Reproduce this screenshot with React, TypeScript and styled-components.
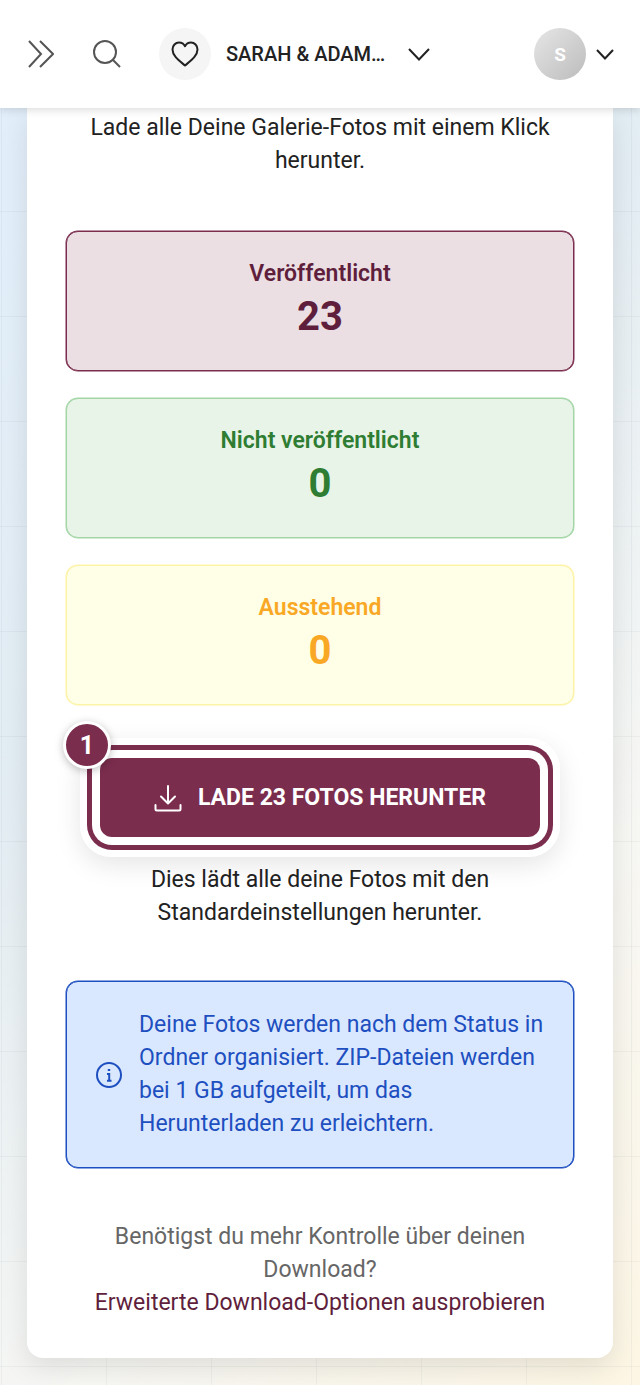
import React from "react";
import styled, { createGlobalStyle } from "styled-components";

const Global = createGlobalStyle`
  * { box-sizing: border-box; }
  html, body { margin: 0; padding: 0; }
  body {
    font-family: Roboto, "Liberation Sans", sans-serif;
    min-height: 1385px;
    overflow: hidden;
    background-color: #f5f5f2;
    background-image:
      linear-gradient(rgba(120,130,140,0.08) 1px, transparent 1px),
      linear-gradient(90deg, rgba(120,130,140,0.08) 1px, transparent 1px),
      linear-gradient(135deg, #e2effc 0%, #e3edf3 40%, #f7f7f4 72%, #fdf6e4 100%);
    background-size: 105px 105px, 105px 105px, 100% 1385px;
    background-position: 0 1px, 1px 0, 0 0;
  }
`;

const Page = styled.div`
  width: 640px;
  height: 1385px;
  overflow: hidden;
`;

const Header = styled.header`
  position: relative;
  z-index: 2;
  height: 108px;
  background: #fff;
  box-shadow: 0 2px 8px rgba(0, 0, 0, 0.14);
  display: flex;
  align-items: center;
  padding: 0 26px 0 28px;
`;

const IconSlot = styled.span<{ $w: number; $mr: number; $color?: string }>`
  display: flex;
  align-items: center;
  justify-content: center;
  width: ${(p) => p.$w}px;
  margin-right: ${(p) => p.$mr}px;
  color: ${(p) => p.$color ?? "#222"};
  flex: none;
`;

const HeartBubble = styled.span`
  width: 52px;
  height: 52px;
  border-radius: 50%;
  background: #f5f5f5;
  display: flex;
  align-items: center;
  justify-content: center;
  margin-right: 15px;
  flex: none;
`;

const EventName = styled.span`
  width: 162px;
  margin-right: 20px;
  font-size: 20px;
  font-weight: 500;
  color: #222;
  white-space: nowrap;
  flex: none;
`;

const Avatar = styled.span`
  width: 52px;
  height: 52px;
  border-radius: 50%;
  margin-left: 104px;
  margin-right: 10px;
  background: linear-gradient(135deg, #e6e6e6, #bcbcbc);
  color: #fff;
  font-size: 19px;
  font-weight: 700;
  display: flex;
  align-items: center;
  justify-content: center;
  flex: none;
`;

const Card = styled.main`
  margin: 0 27px;
  height: 1250px;
  background: #fff;
  border-radius: 0 0 16px 16px;
  box-shadow: 0 10px 28px rgba(0, 0, 0, 0.1);
  padding: 3px 39px 0;
  display: flex;
  flex-direction: column;
`;

const Lead = styled.p`
  margin: 0 0 54px;
  font-size: 23px;
  line-height: 33px;
  color: #222;
  text-align: center;
`;

const Stat = styled.section<{ $bg: string; $border: string; $color: string }>`
  height: 140px;
  margin-bottom: 27px;
  border: 1px solid ${(p) => p.$border};
  box-shadow: 0 0 0 0.5px ${(p) => p.$border};
  border-radius: 12px;
  background: ${(p) => p.$bg};
  color: ${(p) => p.$color};
  display: flex;
  flex-direction: column;
  align-items: center;
  padding-top: 27px;
`;

const StatLabel = styled.div`
  font-size: 23px;
  line-height: 30px;
  font-weight: 600;
`;

const StatValue = styled.div`
  margin-top: 6px;
  font-size: 40px;
  line-height: 44px;
  font-weight: 700;
`;

const ButtonWrap = styled.div`
  position: relative;
  align-self: center;
  width: 440px;
  margin-top: 26px;
`;

const DownloadButton = styled.button`
  width: 440px;
  height: 79px;
  border: 0;
  border-radius: 12px;
  background: #7b2d4e;
  color: #fff;
  font-family: inherit;
  font-size: 23px;
  font-weight: 700;
  display: flex;
  align-items: center;
  justify-content: center;
  gap: 16px;
  box-shadow:
    0 0 0 8px #fff,
    0 0 0 13px #7b2d4e,
    0 0 0 20px #fff,
    0 8px 26px 20px rgba(0, 0, 0, 0.1);
`;

const Badge = styled.span`
  position: absolute;
  left: -37px;
  top: -37px;
  width: 48px;
  height: 48px;
  border-radius: 50%;
  border: 3px solid #fff;
  background: #7b2d4e;
  color: #fff;
  font-size: 25px;
  font-weight: 700;
  display: flex;
  align-items: center;
  justify-content: center;
  box-shadow: 0 2px 8px rgba(0, 0, 0, 0.25);
`;

const Caption = styled.p`
  margin: 26px 0 52px;
  font-size: 23px;
  line-height: 33px;
  color: #222;
  text-align: center;
`;

const InfoBox = styled.aside`
  height: 187px;
  border: 1px solid #1e4fc0;
  box-shadow: 0 0 0 0.5px #1e4fc0;
  border-radius: 12px;
  background: #d9e8fe;
  color: #1e4fc0;
  display: flex;
  align-items: center;
  gap: 17px;
  padding: 0 20px 1px 29px;
`;

const InfoIcon = styled.svg`
  flex: none;
  margin-top: 1px;
`;

const InfoText = styled.p`
  margin: 0;
  font-size: 23px;
  line-height: 33px;
`;

const Footer = styled.div`
  margin-top: 52px;
  font-size: 23px;
  line-height: 33px;
  color: #666;
  text-align: center;
`;

const AdvancedLink = styled.a`
  display: block;
  color: #5f1f3c;
  text-decoration: none;
`;

const Chevron = ({ w, h, sw = 2 }: { w: number; h: number; sw?: number }) => (
  <svg width={w} height={h} viewBox={`0 0 ${w} ${h}`} fill="none" stroke="currentColor" strokeWidth={sw}>
    <path d={`M1 1 L${w / 2} ${h - 1.5} L${w - 1} 1`} />
  </svg>
);

export default function App() {
  return (
    <Page>
      <Global />
      <Header>
        <IconSlot $w={26} $mr={39} $color="#555">
          <svg width="26" height="28" viewBox="0 0 26 28" fill="none" stroke="currentColor" strokeWidth="2">
            <path d="M1 1 L13 14 L1 27" />
            <path d="M12 1 L25 14 L12 27" />
          </svg>
        </IconSlot>
        <IconSlot $w={28} $mr={38} $color="#555">
          <svg width="28" height="28" viewBox="0 0 28 28" fill="none" stroke="currentColor" strokeWidth="2">
            <circle cx="12" cy="12" r="11" />
            <path d="M20 20 L27 27" />
          </svg>
        </IconSlot>
        <HeartBubble>
          <svg width="28" height="26" viewBox="0 0 28 26" fill="none" stroke="#222" strokeWidth="2" strokeLinejoin="round">
            <path d="M14 24.5 C8 19.5 1.5 15 1.5 8.5 C1.5 4.5 4.5 1.5 8 1.5 C10.5 1.5 12.8 2.8 14 5.2 C15.2 2.8 17.5 1.5 20 1.5 C23.5 1.5 26.5 4.5 26.5 8.5 C26.5 15 20 19.5 14 24.5 Z" />
          </svg>
        </HeartBubble>
        <EventName>SARAH &amp; ADAM…</EventName>
        <IconSlot $w={22} $mr={0}>
          <Chevron w={22} h={13} />
        </IconSlot>
        <Avatar>S</Avatar>
        <IconSlot $w={18} $mr={0}>
          <Chevron w={18} h={11} />
        </IconSlot>
      </Header>
      <Card>
        <Lead>Lade alle Deine Galerie-Fotos mit einem Klick herunter.</Lead>
        <Stat $bg="#ebdfe4" $border="#7b2d4e" $color="#5f1f3c">
          <StatLabel>Veröffentlicht</StatLabel>
          <StatValue>23</StatValue>
        </Stat>
        <Stat $bg="#e8f4e8" $border="#a3d5a5" $color="#2e7d32">
          <StatLabel>Nicht veröffentlicht</StatLabel>
          <StatValue>0</StatValue>
        </Stat>
        <Stat $bg="#fffee6" $border="#fdf3a6" $color="#f9a825">
          <StatLabel>Ausstehend</StatLabel>
          <StatValue>0</StatValue>
        </Stat>
        <ButtonWrap>
          <DownloadButton>
            <svg width="28" height="28" viewBox="0 0 28 28" fill="none" stroke="currentColor" strokeWidth="2" strokeLinecap="round" strokeLinejoin="round">
              <path d="M14 2 V19 M7 12.5 L14 19.5 L21 12.5" />
              <path d="M1.5 21 V25 Q1.5 26.5 3 26.5 H25 Q26.5 26.5 26.5 25 V21" />
            </svg>
            LADE 23 FOTOS HERUNTER
          </DownloadButton>
          <Badge>1</Badge>
        </ButtonWrap>
        <Caption>Dies lädt alle deine Fotos mit den Standardeinstellungen herunter.</Caption>
        <InfoBox>
          <InfoIcon width="26" height="26" viewBox="0 0 26 26" fill="none" stroke="currentColor" strokeWidth="2">
            <circle cx="13" cy="13" r="12" />
            <path d="M11 12 H13.2 V18.5 M11 18.8 H15.5" strokeWidth="2" />
            <path d="M13 7 V9" strokeWidth="2.4" />
          </InfoIcon>
          <InfoText>Deine Fotos werden nach dem Status in Ordner organisiert. ZIP-Dateien werden bei 1 GB aufgeteilt, um das Herunterladen zu erleichtern.</InfoText>
        </InfoBox>
        <Footer>
          Benötigst du mehr Kontrolle über deinen Download?
          <AdvancedLink href="#">Erweiterte Download-Optionen ausprobieren</AdvancedLink>
        </Footer>
      </Card>
    </Page>
  );
}
